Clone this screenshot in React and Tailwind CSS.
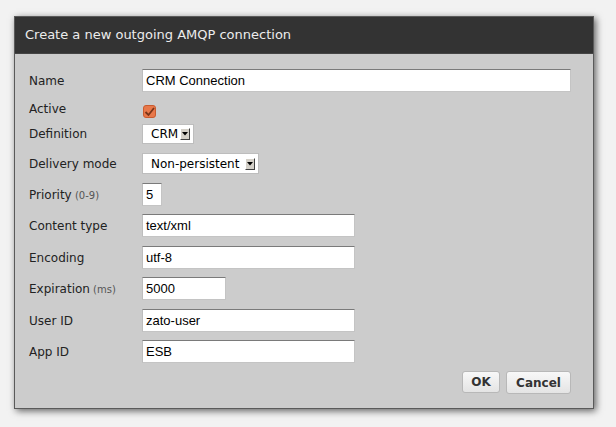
import React from "react";

const dv = { fontFamily: '"DejaVu Sans", Verdana, sans-serif' };
const ls = { fontFamily: '"Liberation Sans", Arial, sans-serif' };

function Label({ children, sub }) {
  return (
    <div className="w-[113px] shrink-0 text-[12px] text-[#222]" style={dv}>
      {children}
      {sub && <span className="text-[10px] text-[#555]"> {sub}</span>}
    </div>
  );
}

function Input({ value, w }) {
  return (
    <div
      className={`${w} h-[23px] bg-white border border-[#c4c4c4] border-t-[#7a7a7a] border-l-[#bdbdbd] flex items-center pl-[3px] text-[13px] text-black`}
      style={ls}
    >
      {value}
    </div>
  );
}

function Select({ value, w, h }) {
  return (
    <div
      className={`${w} ${h} bg-white border border-[#bdbdbd] flex items-center justify-between pl-[8px] pr-[3px] text-[12px] text-black`}
      style={dv}
    >
      <span>{value}</span>
      <div className="w-[10px] h-[12px] bg-[#d4d0c8] border border-t-white border-l-white border-r-[#404040] border-b-[#404040] flex items-center justify-center">
        <svg width="6" height="4" viewBox="0 0 6 4">
          <path d="M0 0 L6 0 L3 3.5 Z" fill="#000" />
        </svg>
      </div>
    </div>
  );
}

export default function App() {
  return (
    <div className="w-[616px] h-[427px] bg-[#f2f2f2] pt-[16px] pl-[14px]">
      <div className="w-[580px] h-[393px] bg-[#cccccc] flex flex-col shadow-[2px_2px_7px_rgba(0,0,0,0.6)] border border-[#5a5a5a]">
        <div
          className="h-[37px] bg-[#333333] border-b border-[#444] flex items-center pl-[10px] text-[13px] text-[#ececec] shrink-0"
          style={dv}
        >
          Create a new outgoing AMQP connection
        </div>
        <div className="flex flex-col pl-[14px] pt-[15px]">
          <div className="flex items-center h-[23px]">
            <Label>Name</Label>
            <Input value="CRM Connection" w="w-[429px]" />
          </div>
          <div className="flex items-start h-[22px] mt-[5px]">
            <div className="pt-[3px]">
              <Label>Active</Label>
            </div>
            <div className="mt-[8px] ml-[1px] w-[13px] h-[13px] rounded-[3px] bg-[#e8784a] border border-[#c95a2e] flex items-center justify-center">
              <svg width="11" height="10" viewBox="0 0 11 10">
                <path d="M1.5 5 L4.5 8 L10 1" stroke="#7a3418" strokeWidth="1.8" fill="none" />
              </svg>
            </div>
          </div>
          <div className="flex items-center h-[20px] mt-[5px]">
            <Label>Definition</Label>
            <Select value="CRM" w="w-[52px]" h="h-[20px]" />
          </div>
          <div className="flex items-center h-[21px] mt-[9px]">
            <Label>Delivery mode</Label>
            <Select value="Non-persistent" w="w-[117px]" h="h-[21px]" />
          </div>
          <div className="flex items-center h-[23px] mt-[9px]">
            <Label sub="(0-9)">Priority</Label>
            <Input value="5" w="w-[20px]" />
          </div>
          <div className="flex items-center h-[23px] mt-[8px]">
            <Label>Content type</Label>
            <Input value="text/xml" w="w-[213px]" />
          </div>
          <div className="flex items-center h-[23px] mt-[9px]">
            <Label>Encoding</Label>
            <Input value="utf-8" w="w-[213px]" />
          </div>
          <div className="flex items-center h-[23px] mt-[8px]">
            <Label sub="(ms)">Expiration</Label>
            <Input value="5000" w="w-[84px]" />
          </div>
          <div className="flex items-center h-[23px] mt-[9px]">
            <Label>User ID</Label>
            <Input value="zato-user" w="w-[213px]" />
          </div>
          <div className="flex items-center h-[23px] mt-[8px]">
            <Label>App ID</Label>
            <Input value="ESB" w="w-[213px]" />
          </div>
          <div className="flex justify-end gap-[6px] mt-[8px] pr-[22px]">
            <button
              className="w-[38px] h-[22px] rounded-[3px] border border-[#b8b8b8] bg-gradient-to-b from-[#f8f8f8] to-[#e4e4e4] text-[12px] font-bold text-[#333]"
              style={dv}
            >
              OK
            </button>
            <button
              className="w-[65px] h-[23px] rounded-[3px] border border-[#b8b8b8] bg-gradient-to-b from-[#f8f8f8] to-[#e4e4e4] text-[12px] font-bold text-[#333]"
              style={dv}
            >
              Cancel
            </button>
          </div>
        </div>
      </div>
    </div>
  );
}
